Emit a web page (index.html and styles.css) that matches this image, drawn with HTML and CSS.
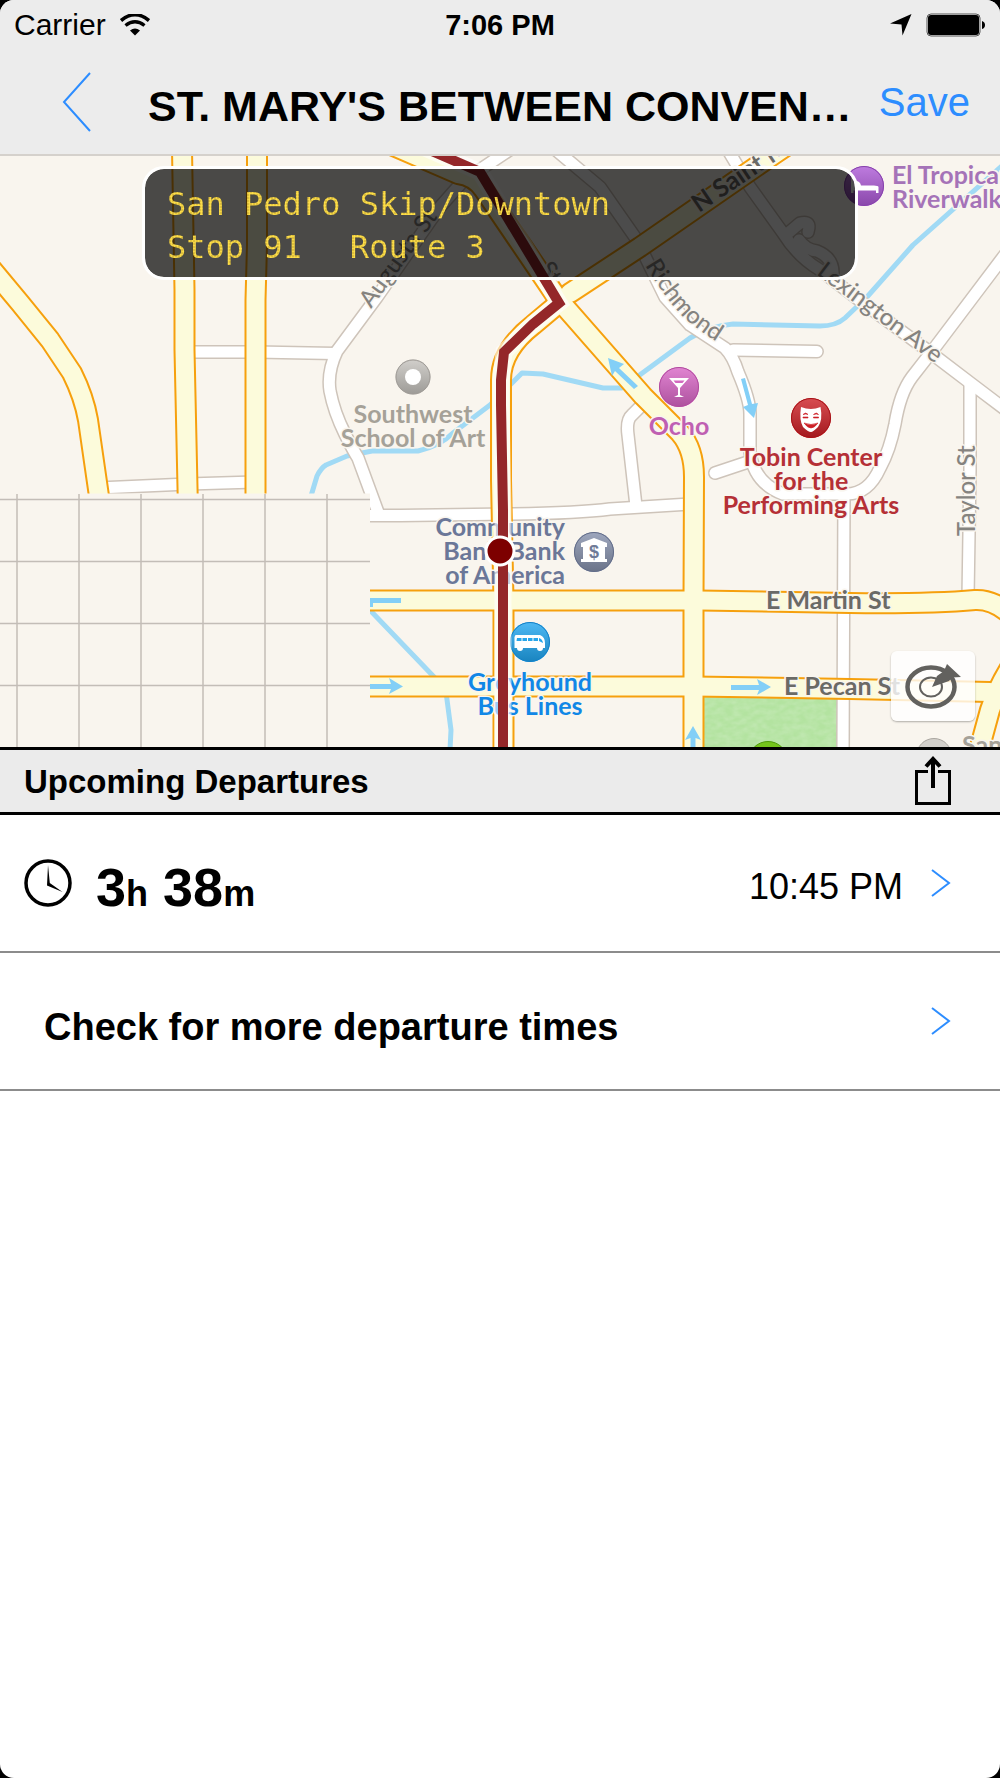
FILE: index.html
```
<!DOCTYPE html>
<html lang="en">
<head>
	<meta charset="UTF-8">
	<meta name="viewport" content="width=device-width, initial-scale=1">
	<title>Upcoming Departures</title>
	<link rel="stylesheet" href="styles.css">
</head>
<body>
<div class="screen">

	<header class="top">
		<div class="status">
			<div class="status-left">
				<span>Carrier</span>
				<svg width="30" height="22" viewBox="0 0 30 22" aria-hidden="true">
					<path d="M1 6.500Q15-5 29 6.500" fill="none" stroke="#000" stroke-width="3.600"/>
					<path d="M5.500 11.500Q15 4 24.500 11.500" fill="none" stroke="#000" stroke-width="3.400"/>
					<path d="M10 16.500Q15 12.500 20 16.500L15 21.500z"/>
				</svg>
			</div>
			<strong class="clock">7:06 PM</strong>
			<div class="status-right">
				<svg width="22" height="22" viewBox="0 0 22 22" aria-hidden="true"><path d="M21.500 0L12.500 21.500L11.500 10.500L0 9.500z"/></svg>
				<svg width="60" height="24" viewBox="0 0 60 24" aria-hidden="true">
					<rect x="1" y="1" width="53" height="22" rx="4" fill="none" stroke="#555" stroke-width="1"/>
					<rect x="2" y="2" width="51" height="20" rx="3"/>
					<path d="M56 8q3 1 3 4t-3 4z"/>
				</svg>
			</div>
		</div>
		<nav class="bar">
			<button type="button" class="back" aria-label="Back">
				<svg width="30" height="60" viewBox="0 0 30 60"><path d="M28 1L2 30L28 59" fill="none" stroke="#2d8dff" stroke-width="2"/></svg>
			</button>
			<h1>ST. MARY'S BETWEEN CONVEN…</h1>
			<button type="button" class="save">Save</button>
		</nav>
	</header>

	<section class="map" aria-label="Map">
		<svg class="map-canvas" viewBox="0 156 1000 591">
			<defs>
				<linearGradient id="shine" x1="0" y1="0" x2="0" y2="1">
					<stop offset="0" stop-color="#fff" stop-opacity=".2"/>
					<stop offset="1" stop-color="#000" stop-opacity=".2"/>
				</linearGradient>
				<filter id="grass" x="0" y="0" width="1" height="1">
					<feTurbulence type="fractalNoise" baseFrequency=".12 .2" numOctaves="2"/>
					<feColorMatrix values="0 0 0 0 1  0 0 0 0 1  0 0 0 0 1  .9 0 0 0 -.25"/>
				</filter>
				<g id="white-roads">
					<path d="M520 143L463 181L440 207L377 297L337 351Q327 372 330 391Q334 412 345 434Q353 450 358 458L379 515"/>
					<path d="M190 352L256 352L335 353.500"/>
					<path d="M98 488L188 484L255 482"/>
					<path d="M350 515.500H400L513 514Q580 513 610 509L690 504"/>
					<path d="M636 506L628 435Q626 420 632 415L645 402"/>
					<path d="M550 145L600 187L637 240L665 297L690 325L725 348Q733 356 738 372Q750 400 750 414V452Q754 483 783 494H845Q868 495 880 468Q890 450 895 424Q900 393 912 377L933 350L1010 248"/>
					<path d="M733 350L817 351.500"/>
					<path d="M715 473L748 462"/>
					<path d="M844 493L843 760"/>
					<path d="M725 145L750 187L783 233Q798 257 820 270L863 303L927 350L973 385L1010 413"/>
					<path d="M787 234L800 223Q812 220 808 232"/>
					<path d="M799 240Q806 250 817 251Q834 258 833 275"/>
					<path d="M970 385V470L968 598"/>
				</g>
				<g id="yellow-roads">
					<path d="M-15 261L20 303L50 340L72 373Q84 397 88 420L101 510"/>
					<path d="M182 150L184.500 290V350L188 510"/>
					<path d="M257 150V245L255.500 300V510"/>
					<path d="M375 138L458 174Q475 176 484 190L558 299L643 396L680 433Q694 449 694 477L693.500 600V760"/>
					<path d="M570 293L640 247L773 155L810 130"/>
					<path d="M558 304L533 325Q501 350 501 380V480L503.500 600V760"/>
					<path d="M350 600.500H700L850 603Q930 604 975 600Q995 599 1014 618"/>
					<path d="M350 686.500H694L850 689L990 692"/>
					<path d="M1022 650Q1000 680 990 710L975 765"/>
				</g>
			</defs>

			<rect y="150" width="1000" height="610" fill="#f9f5ee"/>
			<rect x="704" y="695" width="134" height="60" fill="#b3e3a0"/>
			<rect x="704" y="695" width="134" height="60" filter="url(#grass)" opacity=".35"/>

			<!-- creek -->
			<g class="creek">
				<path d="M311 496L317 476Q321 468 326 465L347 456L372 451H418Q440 446 453 433L490 405L513 382L522 373L543 374L603 388H622L690 338Q710 326 733 324L820 326Q836 326 845 318L867 297L913 245L1003 165"/>
				<path d="M366 606L436 679L446 692L451 730L450 750"/>
			</g>

			<!-- streets: casing first, then the fill -->
			<use href="#white-roads" class="road casing"/>
			<use href="#white-roads" class="road paved"/>
			<use href="#yellow-roads" class="road main-casing"/>
			<use href="#yellow-roads" class="road main-paved"/>

			<!-- tile that has not loaded yet -->
			<rect y="493.500" width="370" height="260" fill="#f9f5ee"/>
			<path d="M17 494V750M79 494V750M141 494V750M203 494V750M265 494V750M327 494V750M0 499.500H370M0 561.500H370M0 623.500H370M0 685.500H370" stroke="#c3bdb7" stroke-width="1.500"/>

			<!-- one way arrows -->
			<g fill="#83cff7">
				<path d="M608 358L624 364L619 368L638 386L634 389L615 371L612 376z"/>
				<path d="M741 379L745 378L752 404L758 403L754 418L743 407L748 405z"/>
				<path d="M370 598H401V603H373V607H370z"/>
				<path d="M370 684H391L389 678L403 686.500L389 694L391 689H370z"/>
				<path d="M731 685H759L757 679L771 687L757 695L759 690H731z"/>
				<path d="M690.500 750V738L685 740L693 726L701 740L695.500 738V750z"/>
			</g>

			<!-- street names -->
			<g class="street">
				<path id="richmond" d="M645 265Q660 290 675 308T722 345" fill="none"/>
				<text><textPath href="#richmond">Richmond</textPath></text>
				<text transform="translate(371 309) rotate(-54)">Augusta St</text>
				<text transform="translate(816 274) rotate(37)">Lexington Ave</text>
				<text transform="translate(975 536) rotate(-90)">Taylor St</text>
				<text transform="translate(538 268) rotate(58)">St</text>
			</g>
			<g class="avenue">
				<text transform="translate(699 213) rotate(-34)">N Saint Mary's</text>
				<text x="766" y="609">E Martin St</text>
				<text x="784" y="695">E Pecan St</text>
			</g>

			<!-- places -->
			<g class="place">
				<g fill="#a5a198">
					<text x="413" y="423" text-anchor="middle">Southwest</text>
					<text x="413" y="447" text-anchor="middle">School of Art</text>
					<text x="962" y="754">San</text>
				</g>
				<g fill="#6b7798">
					<text x="565" y="536" text-anchor="end">Community</text>
					<text x="565" y="560" text-anchor="end">Bank-Bank</text>
					<text x="565" y="584" text-anchor="end">of America</text>
				</g>
				<g fill="#1187e6">
					<text x="530" y="691" text-anchor="middle">Greyhound</text>
					<text x="530" y="715" text-anchor="middle">Bus Lines</text>
				</g>
				<text x="679" y="435" text-anchor="middle" fill="#bf5fb2">Ocho</text>
				<g fill="#b53036">
					<text x="811" y="466" text-anchor="middle">Tobin Center</text>
					<text x="811" y="490" text-anchor="middle">for the</text>
					<text x="811" y="514" text-anchor="middle">Performing Arts</text>
				</g>
				<g fill="#a573b8">
					<text x="892" y="184">El Tropicano</text>
					<text x="892" y="208">Riverwalk</text>
				</g>
			</g>

			<!-- school -->
			<circle cx="413" cy="377" r="17.500" fill="#c5c2bd"/>
			<circle cx="413" cy="377" r="17" fill="url(#shine)" stroke="#9f9b96"/>
			<circle cx="413" cy="377" r="8" fill="#fff"/>
			<!-- bar -->
			<circle cx="679" cy="387" r="20" fill="#d966c6"/>
			<circle cx="679" cy="387" r="19.500" fill="url(#shine)" stroke="#b04c9e"/>
			<path d="M669 378H689L680 388V395L684 397H674L678 395V388z" fill="#fff"/>
			<path d="M673.500 380.500H684.500L682.500 383H675.500z" fill="#d468c0"/>
			<!-- theatre -->
			<circle cx="811" cy="418" r="20" fill="#cd2026"/>
			<circle cx="811" cy="418" r="19.500" fill="url(#shine)" stroke="#a61318"/>
			<path d="M801 407Q811 411 820.500 407Q823 420 818 427Q813 432 811 432Q808 432 803 427Q799 420 801 407z" fill="#fff"/>
			<path d="M804 423Q811 426 818 423Q811 433 804 423zM803 414.500q3-3 5 0q-2-1-5 0zM813.500 414.500q3-3 5 0q-2-1-5 0zM803 417h5v1h-5zM813.500 417h5v1h-5z" fill="#cd2026" stroke="#cd2026" stroke-width=".6"/>
			<!-- bank -->
			<circle cx="594" cy="552" r="20" fill="#8590ac"/>
			<circle cx="594" cy="552" r="19.500" fill="url(#shine)" stroke="#626c88"/>
			<path d="M594 538L607 543V547H605V559H607V562H581V559H583V547H581V543z" fill="#fff"/>
			<text x="594" y="558" text-anchor="middle" class="dollar">$</text>
			<!-- bus -->
			<circle cx="530" cy="642" r="20" fill="#20a6f0"/>
			<circle cx="530" cy="642" r="19.500" fill="url(#shine)" stroke="#1580c6"/>
			<path d="M515.500 635H540Q545 637 545 643V648H543A3 3 0 0 1 537 648H523A3 3 0 0 1 517 648H514.500V637z" fill="#fff"/>
			<path d="M517 638h4.500v3h-5zM522.500 638h4.500v3h-4.500zM528 638h4.500v3h-4.500zM533.500 638h4.500v3h-4.500zM539 638q3.500 1 4 5l-4-2z" fill="#26a5ea"/>
			<circle cx="520" cy="648" r="2" fill="#fff"/>
			<circle cx="540" cy="648" r="2" fill="#fff"/>
			<!-- hotel -->
			<circle cx="864" cy="186" r="20" fill="#ad5ad6"/>
			<circle cx="864" cy="186" r="19.500" fill="url(#shine)" stroke="#8643aa"/>
			<path d="M851 177V193H853.500V190.500H876V193H878.500V187Q878 185.500 874 185.500H861Q860 181 856 181L853.500 182V177z" fill="#fff"/>
			<!-- park and one more at the lower edge -->
			<circle cx="768" cy="761" r="19.500" fill="#74c41c" stroke="#4e9a0a"/>
			<circle cx="934" cy="756" r="17.500" fill="#d3d0cb" stroke="#aaa6a0"/>

			<!-- bus route and the stop -->
			<path d="M425 148L480 172L559 303L533 324L504 352L501 380V405L503 510V760" class="route-halo"/>
			<path d="M425 148L480 172L559 303L533 324L504 352L501 380V405L503 510V760" class="route"/>
			<circle cx="500" cy="551" r="14" fill="#7d0000" stroke="#fff" stroke-width="3"/>
		</svg>

		<div class="sign">
			<p><span>San Pedro Skip/Downtown</span></p>
			<p><span>Stop 91</span><span>Route 3</span></p>
		</div>

		<button type="button" class="locate" aria-label="Center the map">
			<svg width="56" height="46" viewBox="0 0 56 46">
				<ellipse cx="26" cy="24" rx="23.500" ry="19.500" fill="none" stroke="#62615e" stroke-width="4.500"/>
				<ellipse cx="26" cy="24" rx="11" ry="9.500" fill="none" stroke="#62615e" stroke-width="2"/>
				<path d="M27 24L32 13L39 8L42 1L56 14L47 14.500L44 18z" fill="#62615e"/>
			</svg>
		</button>
	</section>

	<main>
		<div class="section-head">
			<h2>Upcoming Departures</h2>
			<button type="button" class="share" aria-label="Share">
				<svg width="38" height="50" viewBox="0 0 38 50">
					<path d="M14 15.500H2.500V47.500H35.500V15.500H24" fill="none" stroke="#000" stroke-width="3"/>
					<path d="M19 32V4M12 10.500L19 3L26 10.500" fill="none" stroke="#000" stroke-width="4"/>
				</svg>
			</button>
		</div>
		<ul class="departures">
			<li>
				<a href="#">
					<svg width="48" height="48" viewBox="0 0 48 48" aria-hidden="true">
						<circle cx="24" cy="24" r="22" fill="none" stroke="#000" stroke-width="3.500"/>
						<path d="M24 6L25.800 24L38.500 33L23 26.500z"/>
					</svg>
					<span class="wait"><b>3</b>h<b> 38</b>m</span>
					<time datetime="22:45">10:45 PM</time>
					<svg class="chevron" width="20" height="30" viewBox="0 0 20 30" aria-hidden="true"><path d="M1 2L18 15L1 28" fill="none" stroke="#2d8dff" stroke-width="2"/></svg>
				</a>
			</li>
			<li>
				<a href="#">
					<span class="more">Check for more departure times</span>
					<svg class="chevron" width="20" height="30" viewBox="0 0 20 30" aria-hidden="true"><path d="M1 2L18 15L1 28" fill="none" stroke="#2d8dff" stroke-width="2"/></svg>
				</a>
			</li>
		</ul>
	</main>

</div>
</body>
</html>
```
FILE: styles.css
```
body,h1,h2,p,ul,li { margin:0; padding:0; }
body { background:#000; color:#000; font-family:"Liberation Sans", Arial, Helvetica, sans-serif; }
ul { list-style:none; }
a { color:#000; text-decoration:none; }
button { margin:0; padding:0; border:0; background:none; font:inherit; cursor:pointer; }
svg { display:block; }

.screen {
	min-height:100vh;
	background:#fff;
	border-radius:14px;
	overflow:hidden;
}

/* header */
.top {
	background:#ececec;
	border-bottom:2px solid #d5d1cc;
}
.status {
	display:grid;
	grid-template-columns:1fr auto 1fr;
	align-items:center;
	height:50px;
	padding:0 14px;
	font-size:29px;
}
.status-left { display:flex; align-items:center; gap:14px; font-size:30px; }
.status-right { display:flex; align-items:center; justify-content:flex-end; gap:14px; }
.bar {
	display:flex;
	align-items:center;
	height:104px;
	padding:0 30px 0 62px;
}
.back { margin-right:56px; }
.bar h1 {
	flex:1;
	min-width:0;
	padding-top:8px;
	overflow:hidden;
	white-space:nowrap;
	font-size:43px;
	line-height:48px;
}
.save { color:#2d8dff; font-size:40px; }

/* map */
.map { position:relative; }
.map-canvas { width:100%; height:auto; }
.creek path { fill:none; stroke:#a1daf5; stroke-width:5; stroke-linejoin:round; }
.road { fill:none; stroke-linecap:round; stroke-linejoin:round; }
.casing { stroke:#cec4ba; stroke-width:14; }
.paved { stroke:#fff; stroke-width:11; }
.main-casing { stroke:#f6a00d; stroke-width:22; }
.main-paved { stroke:#fcfbdb; stroke-width:18; }
.street, .avenue, .place {
	font-family:Lato, "Open Sans", sans-serif;
	font-size:24px;
	stroke:#f9f5ee;
	stroke-width:3;
	stroke-linejoin:round;
	paint-order:stroke;
}
.street { fill:#85837f; font-weight:500; }
.street path { stroke:none; }
.avenue { fill:#6b6a66; font-size:25px; font-weight:bold; }
.place { font-size:25px; font-weight:bold; }
.dollar { fill:#707b98; font-family:"Liberation Sans", Arial, sans-serif; font-size:18px; font-weight:bold; }
.route, .route-halo { fill:none; }
.route-halo { stroke:#fff; stroke-opacity:.6; stroke-width:17; }
.route { stroke:#942729; stroke-width:10; }

.sign {
	position:absolute;
	top:10px;
	left:14%;
	right:14%;
	margin:0 2px;
	padding:14px 22px 8px;
	border:3px solid #fff;
	border-radius:22px;
	background:rgba(0,0,0,.7);
	background-clip:padding-box;
	color:#ffd93b;
	font-family:"DejaVu Sans Mono", "Liberation Mono", monospace;
	font-size:32px;
	line-height:43px;
	white-space:nowrap;
}
.sign p { display:flex; gap:48px; }
/* led dots inside the letters */
.sign span {
	background:radial-gradient(circle, #ffe04a 40%, #b8992c 100%) 0 0 / 3px 3px;
	-webkit-background-clip:text;
	background-clip:text;
	-webkit-text-fill-color:transparent;
}

.locate {
	position:absolute;
	right:25px;
	bottom:26px;
	display:flex;
	align-items:center;
	justify-content:center;
	width:84px;
	height:70px;
	border-radius:6px;
	background:rgba(255,255,255,.8);
	box-shadow:0 1px 2px rgba(0,0,0,.3);
}

/* departures */
.section-head {
	display:flex;
	align-items:center;
	justify-content:space-between;
	height:62px;
	padding:0 48px 0 24px;
	border-top:3px solid #000;
	border-bottom:3px solid #000;
	background:#ebebeb;
}
.section-head h2 { padding-top:2px; font-size:33px; }
.departures li { border-bottom:2px solid #8c8c8c; }
.departures a {
	display:flex;
	align-items:center;
	height:136px;
	padding:0 49px 0 24px;
}
.wait { padding:8px 0 0 24px; font-size:36px; font-weight:bold; }
.wait b { font-size:54px; }
.departures time { margin-left:auto; padding-top:8px; font-size:36px; }
.more { margin-right:auto; padding:12px 0 0 20px; font-size:38px; font-weight:bold; }
.chevron { margin-left:28px; }
```
